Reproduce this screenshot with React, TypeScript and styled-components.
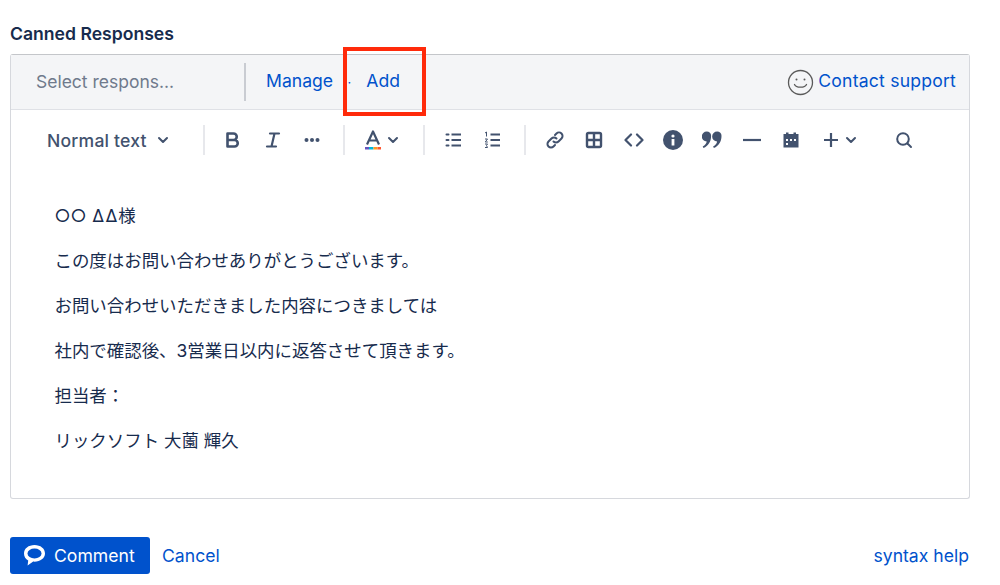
import React from "react";
import styled, { createGlobalStyle } from "styled-components";

const Global = createGlobalStyle`
  html, body { margin: 0; padding: 0; background: #fff; }
  body { font-family: Inter, "Noto Sans CJK JP", sans-serif; }
`;
const Page = styled.div`
  position: relative; width: 1000px; height: 585px; overflow: hidden;
  padding: 24px 30px 0 10px; box-sizing: border-box;
`;
const Title = styled.div`
  font-size: 17.6px; font-weight: 600; line-height: 20px; color: #172b4d; margin-bottom: 10px;
`;
const Editor = styled.div`
  height: 445px; box-sizing: border-box; border: 1.5px solid #d6d8dd; border-radius: 3px;
  border-top-color: #c4c6ca; display: flex; flex-direction: column;
`;
const Header = styled.div`
  height: 55px; flex: none; box-sizing: border-box; background: #f4f5f7; border-bottom: 1.5px solid #dfe1e6;
  display: flex; align-items: center; padding: 0 13px 1px 25px;
`;
const Placeholder = styled.div`
  width: 208px; flex: none; font-size: 17.5px; color: #6f7a8c; line-height: 38px; height: 38px;
  border-right: 2px solid #c9ccd2; box-sizing: content-box; margin-right: 20px;
`;
const HLink = styled.a<{ $wide?: boolean }>`
  font-size: 17.6px; color: #0052cc; line-height: 22px; margin-bottom: 2px;
  letter-spacing: ${(p) => (p.$wide ? "0.2px" : "0")};
`;
const Dot = styled.span`
  font-size: 13px; color: #0052cc; margin: 0 15px 0 14.5px;
`;
const Spacer = styled.div` flex: 1; `;
const Smile = styled.svg`
  width: 27px; height: 27px; margin-right: 4px; margin-top: 1px;
`;
const Toolbar = styled.div`
  height: 60px; flex: none; display: flex; align-items: center; padding: 0 0 0 36px; color: #42526e;
`;
const Style = styled.div`
  display: flex; align-items: center; width: 156px; flex: none;
  font-size: 17.6px; font-weight: 500; color: #42526e; gap: 9px; letter-spacing: 0.2px;
`;
const Sep = styled.div`
  width: 2px; height: 30px; background: #e7e8ec; flex: none;
`;
const Group = styled.div<{ $w: number; $pad?: number }>`
  display: flex; align-items: center; flex: none; width: ${(p) => p.$w}px; padding-left: ${(p) => p.$pad ?? 0}px;
  box-sizing: border-box;
`;
const IconSlot = styled.div<{ $w: number }>`
  width: ${(p) => p.$w}px; flex: none; display: flex; justify-content: flex-start; align-items: center; gap: 3px;
`;
const SearchSlot = styled.div` margin-left: 13px; `;
const Body = styled.div`
  flex: 1; padding: 23px 0 0 43.5px; font-size: 17.45px; line-height: 45px; color: #172b4d;
`;
const Para = styled.div` height: 45px; white-space: pre; `;
const Tri = styled.span` letter-spacing: 1px; `;
const Footer = styled.div`
  display: flex; align-items: center; margin-top: 38px;
`;
const CommentBtn = styled.button`
  width: 140px; height: 37px; border: 0; background: #0052cc; border-radius: 3px; color: #fff;
  font: 400 17.6px Inter, sans-serif; display: flex; align-items: center; padding: 0 0 1px 13px; gap: 8px;
`;
const Cancel = styled.a`
  font-size: 17.6px; color: #0052cc; margin: 0 0 1px 12px;
`;
const Help = styled.a`
  font-size: 17.6px; color: #0052cc; margin: 0 1px 1px auto;
`;
const Highlight = styled.div`
  position: absolute; left: 343px; top: 47px; width: 83px; height: 69px; box-sizing: border-box;
  border: 4px solid #ff2a0a;
`;
const I = styled.svg`
  display: block; color: #42526e; flex: none;
`;
const Chevron = ({ s = 14 }: { s?: number }) => (
  <I width={s} height={s} viewBox="0 0 14 14" fill="none" stroke="currentColor" strokeWidth="2" strokeLinecap="round" strokeLinejoin="round">
    <path d="M3 5l4 4 4-4" />
  </I>
);

export default function App() {
  return (
    <Page>
      <Global />
      <Title>Canned Responses</Title>
      <Editor>
        <Header>
          <Placeholder>Select respons...</Placeholder>
          <HLink>Manage</HLink>
          <Dot>·</Dot>
          <HLink>Add</HLink>
          <Spacer />
          <Smile viewBox="0 0 27 27" fill="none" stroke="#5a5a5a" strokeWidth="1.3" strokeLinecap="round">
            <circle cx="13.5" cy="13.5" r="12" />
            <circle cx="9.5" cy="10.5" r="1" fill="#5a5a5a" stroke="none" />
            <circle cx="17.5" cy="10.5" r="1" fill="#5a5a5a" stroke="none" />
            <path d="M7.5 15.5c1.5 3.6 10.500 3.600 12 0" />
          </Smile>
          <HLink $wide>Contact support</HLink>
        </Header>
        <Toolbar>
          <Style>Normal text <Chevron /></Style>
          <Sep />
          <Group $w={138} $pad={18}>
            <IconSlot $w={39.5}>
              <I width="20" height="20" viewBox="0 0 20 20" fill="none" stroke="currentColor" strokeWidth="2.6" strokeLinejoin="round">
                <path d="M4.500 3.500h6a3 3 0 0 1 0 6.500h-6zM4.500 10h7a3.200 3.200 0 0 1 0 6.500h-7z" />
              </I>
            </IconSlot>
            <IconSlot $w={39.5}>
              <I width="20" height="20" viewBox="0 0 20 20" fill="none" stroke="currentColor" strokeWidth="2.200" strokeLinecap="round">
                <path d="M7 3.500h9M4 16.500h9M11.500 3.500l-3 13" />
              </I>
            </IconSlot>
            <IconSlot $w={39.5}>
              <I width="20" height="20" viewBox="0 0 20 20" fill="currentColor">
                <circle cx="4.500" cy="10" r="2" /><circle cx="10" cy="10" r="2" /><circle cx="15.500" cy="10" r="2" />
              </I>
            </IconSlot>
          </Group>
          <Sep />
          <Group $w={78} $pad={18}>
            <IconSlot $w={40}>
              <I width="20" height="22" viewBox="0 0 20 22" fill="none">
                <path d="M4 15.500L10 2.500l6 13M6 11.500h8" stroke="currentColor" strokeWidth="2.200" strokeLinejoin="round" />
                <rect x="2" y="18" width="4" height="2.500" fill="#6554c0" />
                <rect x="6" y="18" width="4.500" height="2.500" fill="#00b8d9" />
                <rect x="10.500" y="18" width="4" height="2.500" fill="#ff991f" />
                <rect x="14.500" y="18" width="3.500" height="2.500" fill="#ff5630" />
              </I>
              <Chevron />
            </IconSlot>
          </Group>
          <Sep />
          <Group $w={99} $pad={19}>
            <IconSlot $w={39}>
              <I width="20" height="20" viewBox="0 0 20 20" fill="none" stroke="currentColor" strokeWidth="2">
                <path d="M7.500 4.500H17M7.500 10H17M7.500 15.500H17" />
                <path d="M2.500 4.500h2M2.500 10h2M2.500 15.500h2" strokeLinecap="round" />
              </I>
            </IconSlot>
            <IconSlot $w={39}>
              <I width="20" height="20" viewBox="0 0 20 20" fill="none" stroke="currentColor" strokeWidth="2">
                <path d="M7.500 4.500H17M7.500 10H17M7.500 15.500H17" />
                <path d="M2 3l1.500-1v4.500M2 9h2.500l-2.200 3h2.500M2 14h2.500l-1 1.500 1 2H2" strokeWidth="1" />
              </I>
            </IconSlot>
          </Group>
          <Sep />
          <Group $w={355} $pad={19}>
            <IconSlot $w={39.3}>
              <I width="20" height="20" viewBox="0 0 20 20" fill="none" stroke="currentColor" strokeWidth="2" strokeLinecap="round">
                <path d="M8.500 11.500a3.500 3.500 0 0 0 5 0l3-3a3.500 3.500 0 0 0-5-5l-1.500 1.500" />
                <path d="M11.500 8.500a3.500 3.500 0 0 0-5 0l-3 3a3.500 3.500 0 0 0 5 5l1.500-1.500" />
              </I>
            </IconSlot>
            <IconSlot $w={39.3}>
              <I width="20" height="20" viewBox="0 0 20 20" fill="none" stroke="currentColor" strokeWidth="2.400" strokeLinejoin="round">
                <rect x="3" y="3" width="14" height="14" rx="1.500" />
                <path d="M10 3v14M3 10h14" />
              </I>
            </IconSlot>
            <IconSlot $w={39.3}>
              <I width="20" height="20" viewBox="0 0 20 20" fill="none" stroke="currentColor" strokeWidth="2.200" strokeLinecap="round" strokeLinejoin="round">
                <path d="M7 4.500L1.500 10 7 15.500M13 4.500l5.500 5.500-5.500 5.500" />
              </I>
            </IconSlot>
            <IconSlot $w={39.3}>
              <I width="20" height="20" viewBox="0 0 20 20">
                <circle cx="10" cy="10" r="10" fill="currentColor" />
                <rect x="8.600" y="9" width="2.800" height="6.500" fill="#fff" />
                <circle cx="10" cy="6" r="1.600" fill="#fff" />
              </I>
            </IconSlot>
            <IconSlot $w={39.6}>
              <I width="20" height="20" viewBox="0 0 20 20" fill="currentColor">
                <path d="M4.800 1.500a4.300 4.300 0 0 1 4.300 4.500c0 5.500-2.800 10-7.600 12l-.8-1.500c2.400-1.200 3.700-3 4-5a4.300 4.300 0 0 1 .1-10zM15.200 1.500a4.300 4.300 0 0 1 4.300 4.500c0 5.500-2.800 10-7.600 12l-.8-1.500c2.400-1.200 3.700-3 4-5a4.300 4.300 0 0 1 .1-10z" />
              </I>
            </IconSlot>
            <IconSlot $w={39.6}>
              <I width="20" height="20" viewBox="0 0 20 20" fill="none" stroke="currentColor" strokeWidth="2.200">
                <path d="M1 10h18" />
              </I>
            </IconSlot>
            <IconSlot $w={39.3}>
              <I width="20" height="20" viewBox="0 0 20 20" fill="currentColor">
                <path fillRule="evenodd" d="M2.500 4H5V2.500h2.500V4h5V2.500H15V4h2.500v13.500h-15zM5 9v2h2V9zm4 0v2h2V9zm4 0v2h2V9zM5 13v2h2v-2z" />
              </I>
            </IconSlot>
            <IconSlot $w={60}>
              <I width="20" height="20" viewBox="0 0 20 20" fill="none" stroke="currentColor" strokeWidth="2.200">
                <path d="M10 3v14M3 10h14" />
              </I>
              <Chevron />
            </IconSlot>
          </Group>
          <SearchSlot>
            <I width="20" height="20" viewBox="0 0 20 20" fill="none" stroke="currentColor" strokeWidth="2" strokeLinecap="round">
              <circle cx="9" cy="9" r="5.800" />
              <path d="M13.500 13.500L17 17" />
            </I>
          </SearchSlot>
        </Toolbar>
        <Body>
          <Para>○○<Tri> ΔΔ</Tri>様</Para>
          <Para>この度はお問い合わせありがとうございます。</Para>
          <Para>お問い合わせいただきました内容につきましては</Para>
          <Para>社内で確認後、3営業日以内に返答させて頂きます。</Para>
          <Para>担当者：</Para>
          <Para>リックソフト 大薗 輝久</Para>
        </Body>
      </Editor>
      <Footer>
        <CommentBtn>
          <svg width="23" height="23" viewBox="0 0 23 23" fill="none">
            <path d="M11.500 1C5.500 1 1 4.500 1 9.500c0 3.100 1.700 5.600 4.200 7l-.6 5 5.600-3.900c.4.100.8.100 1.300.1 5.800 0 10.500-3.500 10.500-8.200C22 4.500 17.500 1 11.500 1z" fill="#fff" />
            <ellipse cx="11.500" cy="9.500" rx="7" ry="5" fill="#0052cc" />
          </svg>
          Comment
        </CommentBtn>
        <Cancel>Cancel</Cancel>
        <Help>syntax help</Help>
      </Footer>
      <Highlight />
    </Page>
  );
}
